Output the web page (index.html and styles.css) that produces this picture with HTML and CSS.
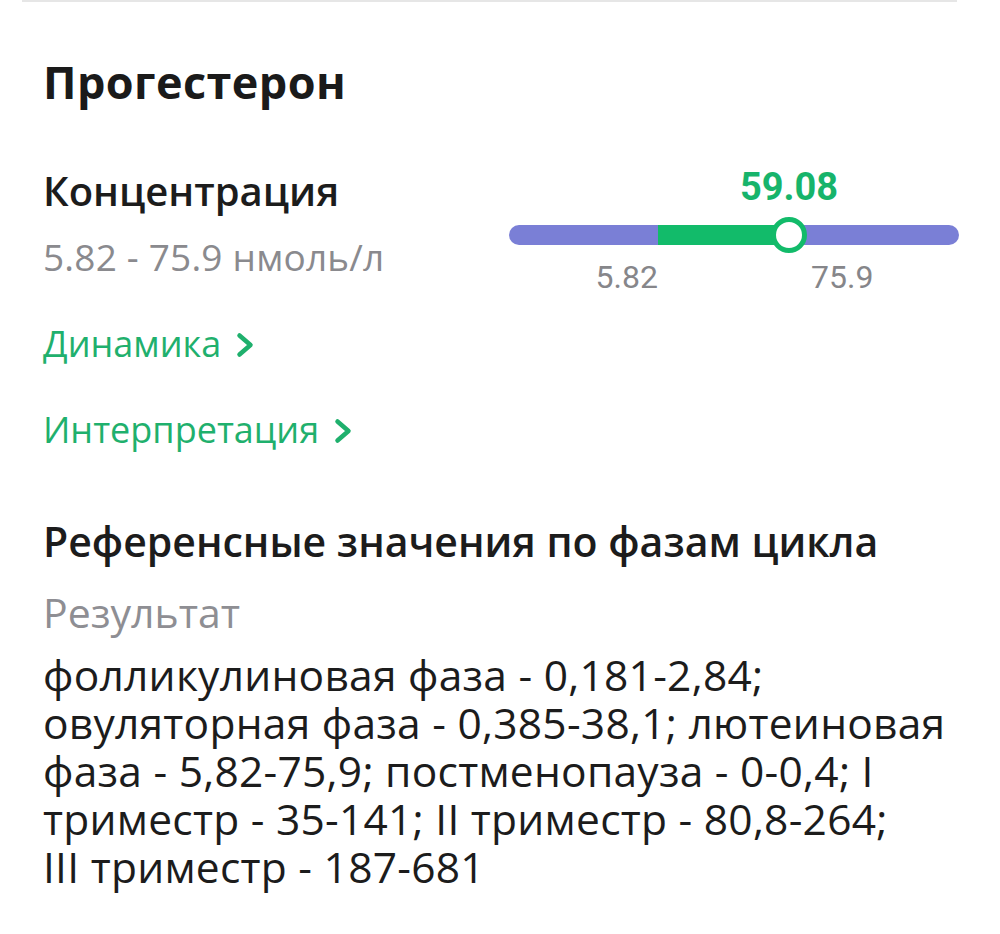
FILE: index.html
```html
<!DOCTYPE html>
<html lang="ru">
<head>
<meta charset="utf-8">
<link rel="stylesheet" href="styles.css">
</head>
<body>
<div class="page">
  <div class="top-rule"></div>
  <h1 class="title">Прогестерон</h1>
  <div class="metric">
    <div class="metric-info">
      <div class="metric-name">Концентрация</div>
      <div class="metric-range">5.82 - 75.9 нмоль/л</div>
    </div>
    <div class="gauge">
      <div class="gauge-value">59.08</div>
      <div class="gauge-bar">
        <div class="seg seg-low"></div>
        <div class="seg seg-norm"></div>
        <div class="seg seg-high"></div>
        <div class="marker"></div>
      </div>
      <div class="gauge-labels">
        <span class="lbl lbl-min">5.82</span>
        <span class="lbl lbl-max">75.9</span>
      </div>
    </div>
  </div>
  <a class="link link-first">Динамика <svg class="chev" viewBox="0 0 18 26" width="18" height="26"><polyline points="3.5,3.5 14.5,13 3.5,22.5" fill="none" stroke="currentColor" stroke-width="4.5" stroke-linecap="round" stroke-linejoin="round"/></svg></a>
  <a class="link link-second">Интерпретация <svg class="chev" viewBox="0 0 18 26" width="18" height="26"><polyline points="3.5,3.5 14.5,13 3.5,22.5" fill="none" stroke="currentColor" stroke-width="4.5" stroke-linecap="round" stroke-linejoin="round"/></svg></a>
  <h2 class="ref-title">Референсные значения по фазам цикла</h2>
  <div class="ref-label">Результат</div>
  <p class="ref-text">фолликулиновая фаза - 0,181-2,84;<br>овуляторная фаза - 0,385-38,1; лютеиновая<br>фаза - 5,82-75,9; постменопауза - 0-0,4; I<br>триместр - 35-141; II триместр - 80,8-264;<br>III триместр - 187-681</p>
</div>
</body>
</html>
```
FILE: styles.css
```css
* { box-sizing: border-box; }
html, body { margin: 0; padding: 0; background: #ffffff; }
body { font-family: "Open Sans", "Noto Sans", sans-serif; color: #1c1c1c; }
.page { width: 1000px; height: 934px; padding: 0 42px 0 43px; overflow: hidden; }
.top-rule { height: 2px; background: #e6e6e6; margin: 0 1px 0 -21px; }
.title {
  margin: 52px 0 0;
  font-weight: 700;
  font-size: 45px;
  line-height: 56px;
  letter-spacing: 0.4px;
  color: #1a1a1a;
}
.metric { display: flex; justify-content: space-between; align-items: flex-start; margin-top: 57px; }
.metric-name { font-size: 40px; font-weight: 600; line-height: 48px; color: #1c1c1c; }
.metric-range { font-size: 37px; line-height: 44px; color: #8a8a8e; margin-top: 20px; letter-spacing: 0.2px; }
.gauge { width: 450px; margin-right: -1px; }
.gauge-value {
  font-family: Roboto, sans-serif; font-weight: bold; font-size: 38px; line-height: 40px;
  color: #17b46b; width: 120px; text-align: center; margin-left: 220px;
}
.gauge-bar { position: relative; display: flex; height: 20px; margin-top: 17.5px; }
.seg { height: 20px; }
.seg-low { width: 149px; background: #7a7fd6; border-radius: 10px 0 0 10px; }
.seg-norm { width: 131px; background: #12bb6a; }
.seg-high { flex: 1; background: #7a7fd6; border-radius: 0 10px 10px 0; }
.marker {
  position: absolute; left: 262px; top: -8px; width: 36px; height: 36px;
  border-radius: 50%; background: #fff; border: 5px solid #12bb6a;
}
.gauge-labels { position: relative; height: 40px; margin-top: 12px; font-family: Roboto, sans-serif; font-size: 32px; line-height: 40px; color: #86868a; }
.lbl { position: absolute; top: 0; }
.lbl-min { right: 301px; }
.lbl-max { left: 302px; }
.link {
  display: flex; align-items: center; gap: 15px; width: max-content;
  font-size: 36px; line-height: 44px; color: #1fb06d; text-decoration: none;
}
.link-first { margin-top: 25px; }
.link-second { margin-top: 42px; }
.chev { display: block; margin-top: 2px; }
.ref-title { margin: 65px 0 0; font-size: 41px; font-weight: 600; line-height: 48px; color: #1c1c1c; }
.ref-label { font-size: 41px; line-height: 48px; color: #8e8e93; margin-top: 23px; }
.ref-text { margin: 15.5px 0 0; font-size: 42.5px; line-height: 48px; letter-spacing: 0.25px; color: #1c1c1c; }
```
